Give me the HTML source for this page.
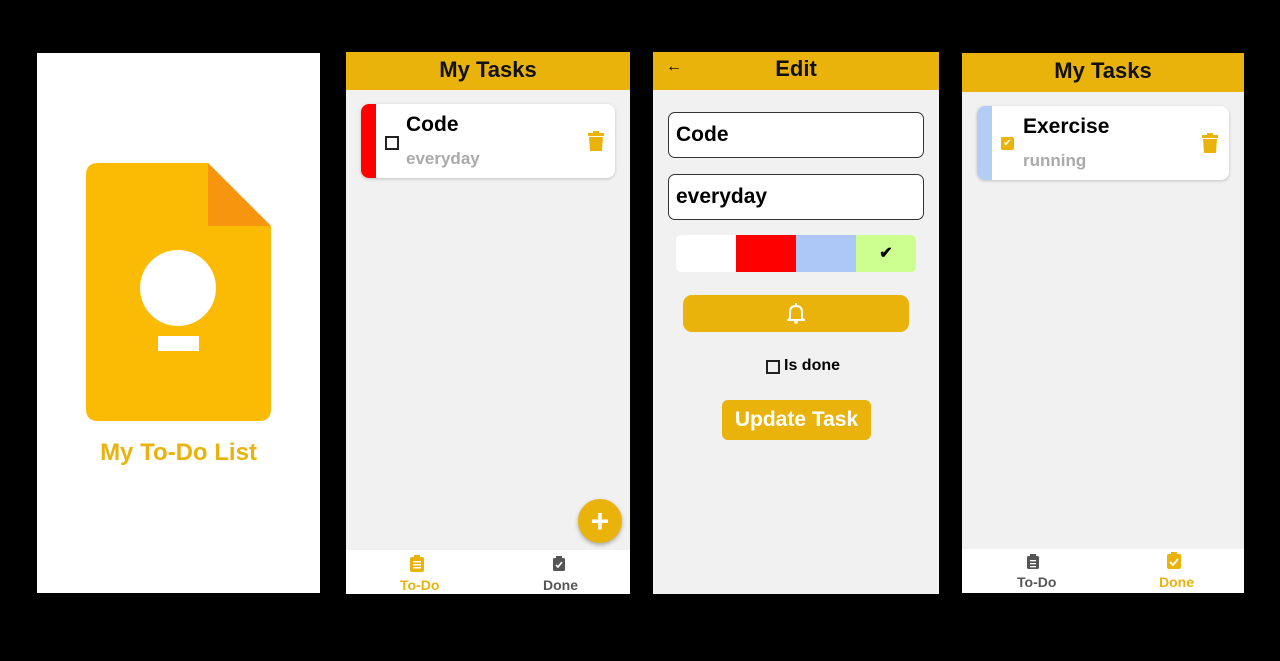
<!DOCTYPE html><html><head><style>
body{margin:0;width:1280px;height:661px;background:#000;position:relative;overflow:hidden;font-family:"Liberation Sans Narrow","Liberation Sans",sans-serif}
.a{position:absolute}
.p{position:absolute;background:#f1f1f1}
.h{position:absolute;left:0;right:0;top:0;background:#E9B30C;text-align:center;font-weight:bold;font-size:22px;color:#111}
.card{position:absolute;background:#fff;border-radius:8px;box-shadow:0 1px 3px rgba(0,0,0,.2);overflow:hidden}
.nav{position:absolute;left:0;right:0;bottom:0;height:44px;background:#fff}
</style></head><body>
<div class="a" style="left:37px;top:53px;width:283px;height:540px;background:#fff">
 <svg class="a" style="left:49px;top:110px" width="185" height="258" viewBox="0 0 185 258">
  <path d="M12 0H122L185 63V246Q185 258 173 258H12Q0 258 0 246V12Q0 0 12 0Z" fill="#FBBB04"/>
  <path d="M122 0L185 63H122Z" fill="#F7950E"/>
  <circle cx="92" cy="125" r="38" fill="#fff"/>
  <rect x="72" y="173" width="41" height="15" fill="#fff"/>
 </svg>
 <div class="a" style="left:0;right:0;top:386px;text-align:center;color:#E9B30C;font-weight:bold;font-size:24px">My To-Do List</div>
</div>

<div class="p" style="left:346px;top:52px;width:284px;height:542px">
 <div class="h" style="height:38px;line-height:36px">My Tasks</div>
 <div class="card" style="left:15px;top:52px;width:254px;height:74px">
  <div class="a" style="left:0;top:0;bottom:0;width:15px;background:#f00"></div>
  <div class="a" style="left:24px;top:32px;width:10px;height:10px;border:2px solid #222"></div>
  <div class="a" style="left:45px;top:9px;font-size:21px;font-weight:bold">Code</div>
  <div class="a" style="left:45px;top:45px;font-size:17px;font-weight:bold;color:#aaa">everyday</div>
  <svg class="a" style="left:227px;top:27px" width="16" height="20" viewBox="0 0 16 20"><rect x="0" y="2" width="16" height="3" fill="#E9B30C"/><rect x="5" y="0" width="6" height="3" fill="#E9B30C"/><path d="M1 6H15L14 20H2Z" fill="#E9B30C"/></svg>
 </div>
 <div class="a" style="left:232px;top:447px;width:44px;height:44px;border-radius:50%;background:#E9B30C;box-shadow:0 2px 4px rgba(0,0,0,.3);color:#fff;font-size:32px;font-weight:bold;text-align:center;line-height:44px">+</div>
 <div class="nav">
  <svg class="a" style="left:64px;top:5px" width="14" height="17"><rect x="0" y="2" width="14" height="15" rx="2" fill="#E9B30C"/><rect x="4" y="0" width="6" height="4" fill="#E9B30C"/><g fill="#fff"><rect x="3" y="6" width="8" height="1.5"/><rect x="3" y="9" width="8" height="1.5"/><rect x="3" y="12" width="8" height="1.5"/></g></svg>
  <div class="a" style="left:54px;top:27px;font-size:14px;font-weight:bold;color:#E9B30C">To-Do</div>
  <svg class="a" style="left:207px;top:6px" width="12" height="15"><rect x="0" y="2" width="12" height="13" rx="1.5" fill="#555"/><rect x="3" y="0" width="6" height="3" fill="#555"/><path d="M3 9L5 11L9 6" stroke="#fff" stroke-width="1.6" fill="none"/></svg>
  <div class="a" style="left:197px;top:27px;font-size:14px;font-weight:bold;color:#555">Done</div>
 </div>
</div>

<div class="p" style="left:653px;top:52px;width:286px;height:542px">
 <div class="h" style="height:38px;line-height:34px">Edit</div>
 <div class="a" style="left:13px;top:6px;font-size:16px">←</div>
 <div class="a" style="left:15px;top:60px;width:256px;height:46px;border:1px solid #333;border-radius:7px;background:#fff;box-sizing:border-box;padding-left:7px;line-height:44px;font-size:21px;font-weight:bold">Code</div>
 <div class="a" style="left:15px;top:122px;width:256px;height:46px;border:1px solid #333;border-radius:7px;background:#fff;box-sizing:border-box;padding-left:7px;line-height:44px;font-size:21px;font-weight:bold">everyday</div>
 <div class="a" style="left:23px;top:183px;width:240px;height:37px;border-radius:5px;overflow:hidden;display:flex">
  <div style="width:60px;background:#fff"></div><div style="width:60px;background:#f00"></div><div style="width:60px;background:#adc8f7"></div><div style="width:60px;background:#ccff90;text-align:center;line-height:37px;font-size:16px;font-weight:bold">✔</div>
 </div>
 <div class="a" style="left:30px;top:243px;width:226px;height:37px;border-radius:9px;background:#E9B30C">
  <svg class="a" style="left:104px;top:8px" width="18" height="21" viewBox="0 0 18 21"><path d="M3 15V9Q3 3 9 3Q15 3 15 9V15L17 17H1Z" fill="none" stroke="#fff" stroke-width="2"/><circle cx="9" cy="19" r="1.8" fill="#fff"/><rect x="8" y="0" width="2" height="3" fill="#fff"/></svg>
 </div>
 <div class="a" style="left:113px;top:308px;width:10px;height:10px;border:2px solid #222"></div>
 <div class="a" style="left:131px;top:305px;font-size:16px;font-weight:bold">Is done</div>
 <div class="a" style="left:69px;top:348px;width:149px;height:40px;border-radius:6px;background:#E9B30C;color:#fff;font-weight:bold;font-size:21px;text-align:center;line-height:40px">Update Task</div>
</div>

<div class="p" style="left:962px;top:53px;width:282px;height:540px">
 <div class="h" style="height:39px;line-height:36px">My Tasks</div>
 <div class="card" style="left:15px;top:53px;width:252px;height:74px">
  <div class="a" style="left:0;top:0;bottom:0;width:15px;background:#b3cdf5"></div>
  <div class="a" style="left:24px;top:31px;width:13px;height:13px;background:#E9B30C;color:#fff;font-size:10px;text-align:center;line-height:13px;border-radius:2px">✔</div>
  <div class="a" style="left:46px;top:9px;font-size:21px;font-weight:bold">Exercise</div>
  <div class="a" style="left:46px;top:45px;font-size:17px;font-weight:bold;color:#aaa">running</div>
  <svg class="a" style="left:225px;top:27px" width="16" height="20" viewBox="0 0 16 20"><rect x="0" y="2" width="16" height="3" fill="#E9B30C"/><rect x="5" y="0" width="6" height="3" fill="#E9B30C"/><path d="M1 6H15L14 20H2Z" fill="#E9B30C"/></svg>
 </div>
 <div class="nav">
  <svg class="a" style="left:65px;top:5px" width="12" height="15"><rect x="0" y="2" width="12" height="13" rx="1.5" fill="#555"/><rect x="3" y="0" width="6" height="3" fill="#555"/><g fill="#fff"><rect x="3" y="6" width="6" height="1.3"/><rect x="3" y="9" width="6" height="1.3"/><rect x="3" y="12" width="6" height="1.3"/></g></svg>
  <div class="a" style="left:55px;top:25px;font-size:14px;font-weight:bold;color:#555">To-Do</div>
  <svg class="a" style="left:205px;top:3px" width="14" height="17"><rect x="0" y="2" width="14" height="15" rx="2" fill="#E9B30C"/><rect x="4" y="0" width="6" height="4" fill="#E9B30C"/><path d="M3 10L6 13L11 7" stroke="#fff" stroke-width="1.8" fill="none"/></svg>
  <div class="a" style="left:197px;top:25px;font-size:14px;font-weight:bold;color:#E9B30C">Done</div>
 </div>
</div>
</body></html>
